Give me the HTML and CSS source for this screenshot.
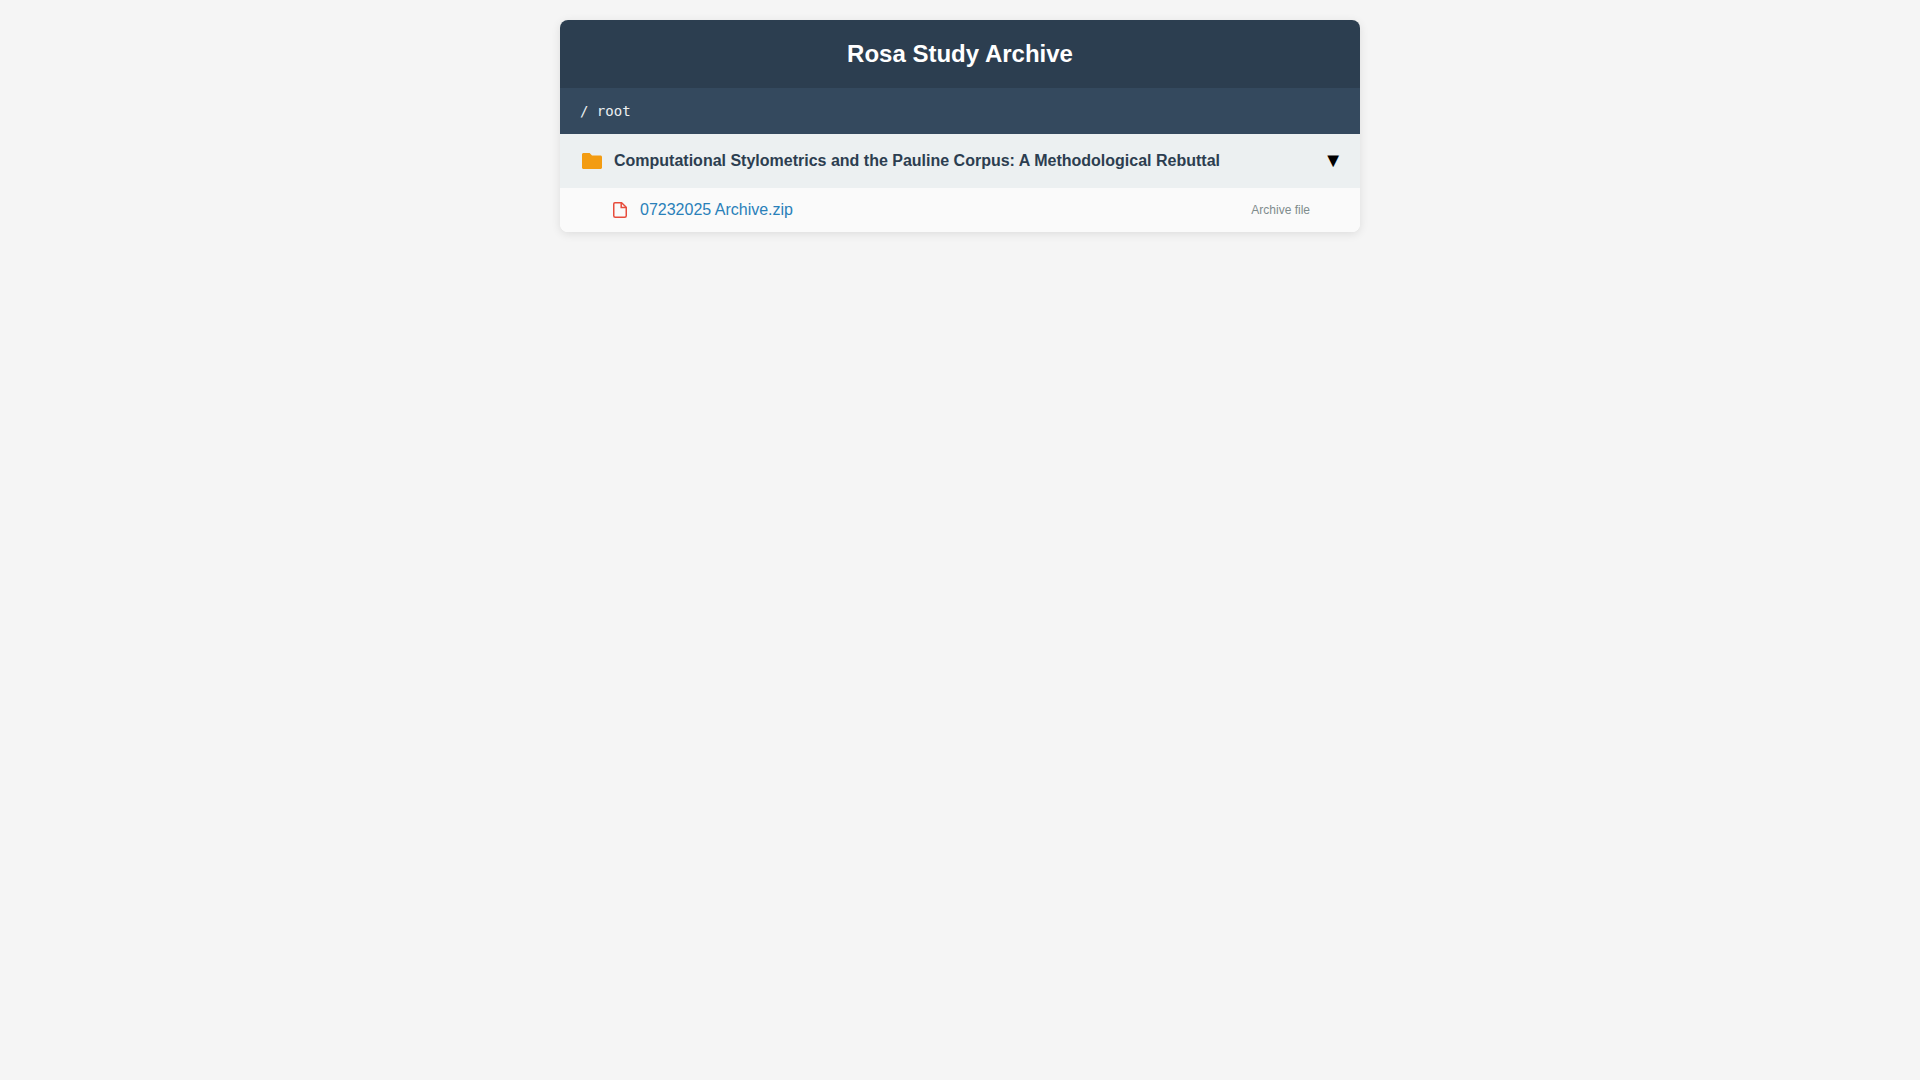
FILE: index.html
```html
<!DOCTYPE html>
<html lang="en">
<head>
    <meta charset="UTF-8">
    <meta name="viewport" content="width=device-width, initial-scale=1.0">
    <title>Rosa Study Archive</title>
    <link rel="stylesheet" href="styles.css">
</head>
<body>

    <div class="container">
        <header class="header">
            <h1>Rosa Study Archive</h1>
        </header>
        <div class="breadcrumb">/ root</div>

        <div class="folder">
            <div class="folder-head">
                <svg class="folder-icon" viewBox="0 0 20 16" width="20" height="16">
                    <path d="M1.5 0H7.6L10 2.5H18.5C19.3 2.5 20 3.2 20 4V14.5C20 15.3 19.3 16 18.5 16H1.5C.7 16 0 15.3 0 14.5V1.5C0 .7.7 0 1.5 0Z" fill="#f39c12"/>
                </svg>
                <span class="folder-name">Computational Stylometrics and the Pauline Corpus: A Methodological Rebuttal</span>
                <span class="toggle">▼</span>
            </div>
            <div class="file-row">
                <svg class="file-icon" viewBox="0 0 14 16" width="14" height="16">
                    <path d="M1.9.75H8.6L13.25 5.2V13.8C13.25 14.6 12.6 15.25 11.7 15.25H2.3C1.4 15.25.75 14.6.75 13.8V1.9C.75 1.3 1.3.75 1.9.75Z" fill="none" stroke="#e74c3c" stroke-width="1.5"/>
                    <path d="M8.2 1V5.6H13" fill="none" stroke="#e74c3c" stroke-width="1.5"/>
                </svg>
                <a class="file-name" href="#">07232025 Archive.zip</a>
                <span class="file-type">Archive file</span>
            </div>
        </div>
    </div>

</body>
</html>
```

FILE: styles.css
```css
body {
    margin: 0;
    padding: 20px;
    background-color: #f5f5f5;
    font-family: 'Liberation Sans', Arial, sans-serif;
}

.container {
    width: 800px;
    margin: 0 auto;
    background-color: white;
    border-radius: 8px;
    overflow: hidden;
    box-shadow: 0 2px 10px rgba(0, 0, 0, 0.1);
}

.header {
    background-color: #2c3e50;
    padding: 20px;
    text-align: center;
}

.header h1 {
    margin: 0;
    color: white;
    font-size: 24px;
    line-height: 28px;
    font-weight: bold;
}

.breadcrumb {
    background-color: #34495e;
    color: #ecf0f1;
    padding: 12px 20px;
    font-family: 'DejaVu Sans Mono', monospace;
    font-size: 14px;
    line-height: 22px;
}

.folder-head {
    display: flex;
    align-items: center;
    height: 54px;
    padding: 0 17px 0 22px;
    background-color: #ecf0f1;
}

.folder-icon {
    margin-right: 12px;
    flex-shrink: 0;
}

.folder-name {
    flex: 1;
    color: #2c3e50;
    font-size: 16px;
    font-weight: bold;
}

.toggle {
    color: black;
    font-size: 20px;
    padding-bottom: 2px;
}

.file-row {
    display: flex;
    align-items: center;
    height: 44px;
    padding: 0 50px 0 53px;
    background-color: #fafafa;
}

.file-icon {
    margin-right: 13px;
    flex-shrink: 0;
}

.file-name {
    flex: 1;
    color: #2980b9;
    font-size: 16px;
    text-decoration: none;
}

.file-type {
    color: #7f8c8d;
    font-size: 12px;
}
```
